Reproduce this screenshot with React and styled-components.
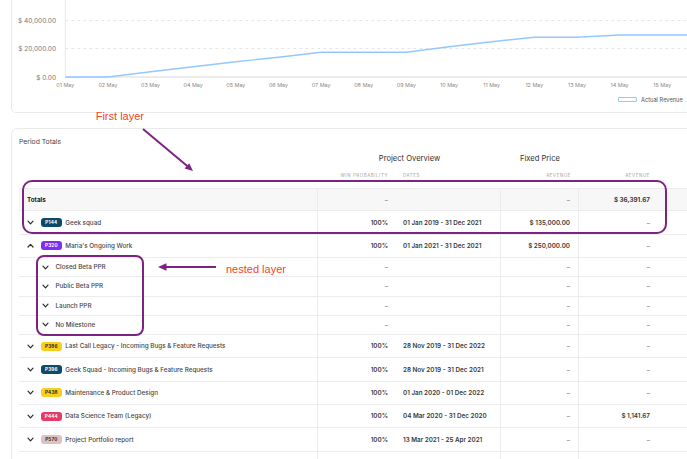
import React from "react";
import styled, { createGlobalStyle } from "styled-components";

const GlobalStyle = createGlobalStyle`
  html, body {
    margin: 0;
    padding: 0;
    background: #fff;
    overflow: hidden;
  }
  body {
    font-family: Inter, "Liberation Sans", sans-serif;
    color: #333;
  }
`;

const COLS = { name: 299, win: 78, dates: 105, fixed: 78, actual: 79, rest: 200 };

const Page = styled.div`
  position: relative;
  width: 687px;
  height: 459px;
  overflow: hidden;
`;

const Stack = styled.div`
  display: flex;
  flex-direction: column;
  gap: 15px;
  padding-left: 11px;
  width: 760px;
`;

const ChartCard = styled.section`
  height: 113px;
  box-sizing: border-box;
  border: 1px solid #ebebeb;
  border-top: none;
  border-radius: 0 0 5px 5px;
  display: flex;
  flex-direction: column;
`;

const ChartSvg = styled.svg`
  display: block;
  flex: none;
  font-family: Inter, "Liberation Sans", sans-serif;
`;

const Legend = styled.div`
  display: flex;
  align-items: center;
  gap: 5px;
  height: 14px;
  padding-left: 606px;
`;

const LegendItem = styled.div`
  display: flex;
  align-items: center;
  gap: 4px;
  font-size: 5.7px;
  color: #555;
  white-space: nowrap;
`;

const Swatch = styled.span`
  width: 19px;
  height: 5px;
  box-sizing: border-box;
  border: 1px ${(p) => (p.$dashed ? "dashed" : "solid")} ${(p) => p.$color};
  border-radius: 1px;
`;

const PeriodCard = styled.section`
  height: 420px;
  box-sizing: border-box;
  border: 1px solid #ebebeb;
  border-radius: 6px;
  padding: 8px 0 0 7px;
`;

const CardTitle = styled.div`
  font-size: 6.8px;
  line-height: 9px;
  color: #444;
`;

const GroupRow = styled.div`
  display: flex;
  align-items: center;
  height: 16px;
  margin-top: 4px;
`;

const GroupCell = styled.div`
  flex: none;
  width: ${(p) => p.$w}px;
  text-align: center;
  font-size: 7.6px;
  color: #333;
  white-space: nowrap;
`;

const SubRow = styled.div`
  display: flex;
  height: 22px;
  box-sizing: border-box;
  padding-top: 5px;
`;

const SubCell = styled.div`
  flex: none;
  width: ${(p) => p.$w}px;
  box-sizing: border-box;
  padding: 0 ${(p) => (p.$align === "left" ? "7px" : "8px")};
  text-align: ${(p) => p.$align || "right"};
  font-size: 4.4px;
  line-height: 10px;
  letter-spacing: 0.6px;
  text-transform: uppercase;
  color: #a3a3a3;
`;

const Row = styled.div`
  display: flex;
  height: ${(p) => (p.$nested ? 19.2 : 23.4)}px;
  box-sizing: border-box;
  border-bottom: 1px solid #ececec;
  border-top: ${(p) => (p.$first ? "1px solid #ececec" : "none")};
  background: ${(p) => (p.$shade ? "#f7f7f8" : "#fff")};
`;

const NameCell = styled.div`
  flex: none;
  width: ${COLS.name}px;
  box-sizing: border-box;
  display: flex;
  align-items: center;
  padding-left: ${(p) => (p.$nested ? 23 : 8)}px;
  border-right: 1px solid #ececec;
  font-size: 6.3px;
  font-weight: ${(p) => (p.$bold ? 700 : 500)};
  color: ${(p) => (p.$bold ? "#222" : "#474747")};
  white-space: nowrap;
`;

const Cell = styled.div`
  flex: none;
  width: ${(p) => p.$w}px;
  box-sizing: border-box;
  display: flex;
  align-items: center;
  justify-content: ${(p) => (p.$align === "left" ? "flex-start" : "flex-end")};
  padding: 0 ${(p) => (p.$align === "left" ? "7px" : "8px")};
  border-right: ${(p) => (p.$divider ? "1px solid #ececec" : "none")};
  font-size: 6.3px;
  font-weight: ${(p) => (p.$bold ? 700 : 600)};
  color: ${(p) => (p.$muted ? "#8f8f8f" : "#3a3a3a")};
  white-space: nowrap;
`;

const Chevron = styled.svg`
  flex: none;
  width: 7px;
  height: 5px;
  margin-right: ${(p) => (p.$nested ? 6.5 : 6.7)}px;
`;

const Badge = styled.span`
  flex: none;
  display: inline-flex;
  align-items: center;
  justify-content: center;
  width: 21.3px;
  height: 9px;
  border-radius: 3px;
  margin-right: 3.3px;
  background: ${(p) => p.$bg};
  color: ${(p) => p.$fg};
  font-size: 4.6px;
  font-weight: 700;
  letter-spacing: 0.2px;
`;

const Overlay = styled.div`
  position: absolute;
  inset: 0;
  pointer-events: none;
`;

const Note = styled.div`
  position: absolute;
  left: ${(p) => p.$x}px;
  top: ${(p) => p.$y}px;
  font-family: "Liberation Sans", Arial, sans-serif;
  font-size: 11px;
  line-height: 11px;
  color: #f4432c;
  white-space: nowrap;
`;

const Frame = styled.div`
  position: absolute;
  left: ${(p) => p.$x}px;
  top: ${(p) => p.$y}px;
  width: ${(p) => p.$w}px;
  height: ${(p) => p.$h}px;
  box-sizing: border-box;
  border: 2px solid #7d2383;
  border-radius: ${(p) => p.$r}px;
`;

const ArrowLayer = styled.svg`
  position: absolute;
  left: 0;
  top: 0;
`;

const TICKS = Array.from({ length: 15 }, (_, i) => `${String(i + 1).padStart(2, "0")} May`);
const tickX = (i) => 65.3 + i * 42.64;
const LINE = [77, 77, 71.7, 66.7, 61.7, 57.3, 52.3, 52.3, 52.3, 46.7, 41.7, 37.3, 37.3, 35, 35, 35];

const PROJECTS = [
  { code: "P144", name: "Geek squad", bg: "#0c4a6c", fg: "#fff", win: "100%", dates: "01 Jan 2019 - 31 Dec 2021", fixed: "$ 135,000.00", actual: "–" },
  {
    code: "P320", name: "Maria's Ongoing Work", bg: "#7b2ff2", fg: "#fff", win: "100%", dates: "01 Jan 2021 - 31 Dec 2021", fixed: "$ 250,000.00", actual: "–",
    open: true,
    children: ["Closed Beta PPR", "Public Beta PPR", "Launch PPR", "No Milestone"],
  },
  { code: "P386", name: "Last Call Legacy - Incoming Bugs & Feature Requests", bg: "#f8cf1f", fg: "#2b2b2b", win: "100%", dates: "28 Nov 2019 - 31 Dec 2022", fixed: "–", actual: "–" },
  { code: "P396", name: "Geek Squad - Incoming Bugs & Feature Requests", bg: "#0c4a6c", fg: "#fff", win: "100%", dates: "28 Nov 2019 - 31 Dec 2021", fixed: "–", actual: "–" },
  { code: "P438", name: "Maintenance & Product Design", bg: "#f8cf1f", fg: "#2b2b2b", win: "100%", dates: "01 Jan 2020 - 01 Dec 2022", fixed: "–", actual: "–" },
  { code: "P444", name: "Data Science Team (Legacy)", bg: "#e83a68", fg: "#fff", win: "100%", dates: "04 Mar 2020 - 31 Dec 2020", fixed: "–", actual: "$ 1,141.67" },
  { code: "P570", name: "Project Portfolio report", bg: "#dcc3c2", fg: "#2b2b2b", win: "100%", dates: "13 Mar 2021 - 25 Apr 2021", fixed: "–", actual: "–" },
  { code: "P592", name: "Internal Tooling", bg: "#ece4e4", fg: "#2b2b2b", win: "100%", dates: "01 May 2021 - 31 Dec 2021", fixed: "–", actual: "–" },
];

const ChevronIcon = ({ up, nested }) => (
  <Chevron viewBox="0 0 7 5" $nested={nested}>
    <polyline
      points={up ? "1,4 3.5,1.4 6,4" : "1,1.2 3.5,3.8 6,1.2"}
      fill="none"
      stroke="#2a2a2a"
      strokeWidth="1.2"
      strokeLinecap="round"
      strokeLinejoin="round"
    />
  </Chevron>
);

const RevenueChart = () => (
  <ChartSvg width="748" height="92" viewBox="12 0 748 92">
    <line x1="65.3" y1="0" x2="65.3" y2="77" stroke="#e8e8e8" />
    <line x1="65.3" y1="20.5" x2="760" y2="20.5" stroke="#e6e6e6" strokeDasharray="3 3" />
    <line x1="65.3" y1="48.5" x2="760" y2="48.5" stroke="#e6e6e6" strokeDasharray="3 3" />
    <line x1="65.3" y1="77" x2="760" y2="77" stroke="#d8d8d8" />
    {[["$ 40,000.00", 20.5], ["$ 20,000.00", 48.5], ["$ 0.00", 77]].map(([t, y]) => (
      <text key={t} x="56" y={y + 2.5} textAnchor="end" fontSize="6.5" fill="#777">
        {t}
      </text>
    ))}
    {TICKS.map((t, i) => (
      <text key={t} x={tickX(i)} y="87" textAnchor="middle" fontSize="5.4" fill="#888">
        {t}
      </text>
    ))}
    <polyline
      points={LINE.map((y, i) => `${tickX(i)},${y}`).join(" ")}
      fill="none"
      stroke="#93c8ff"
      strokeWidth="1.4"
    />
  </ChartSvg>
);

const ProjectRow = ({ p }) => (
  <Row>
    <NameCell>
      <ChevronIcon up={p.open} />
      <Badge $bg={p.bg} $fg={p.fg}>{p.code}</Badge>
      {p.name}
    </NameCell>
    <Cell $w={COLS.win}>{p.win}</Cell>
    <Cell $w={COLS.dates} $align="left" $divider>{p.dates}</Cell>
    <Cell $w={COLS.fixed} $divider $muted={p.fixed === "–"}>{p.fixed}</Cell>
    <Cell $w={COLS.actual} $muted={p.actual === "–"}>{p.actual}</Cell>
    <Cell $w={COLS.rest} />
  </Row>
);

const MilestoneRow = ({ name }) => (
  <Row $nested>
    <NameCell $nested>
      <ChevronIcon nested />
      {name}
    </NameCell>
    <Cell $w={COLS.win} $muted>–</Cell>
    <Cell $w={COLS.dates} $align="left" $divider />
    <Cell $w={COLS.fixed} $divider $muted>–</Cell>
    <Cell $w={COLS.actual} $muted>–</Cell>
    <Cell $w={COLS.rest} />
  </Row>
);

const App = () => {
  return (
    <Page>
      <GlobalStyle />
      <Stack>
        <ChartCard>
          <RevenueChart />
          <Legend>
            <LegendItem>
              <Swatch $color="#93c8ff" />
              Actual Revenue
            </LegendItem>
            <LegendItem>
              <Swatch $color="#b14fd8" $dashed />
              Forecast Revenue
            </LegendItem>
          </Legend>
        </ChartCard>

        <PeriodCard>
          <CardTitle>Period Totals</CardTitle>
          <GroupRow>
            <GroupCell $w={COLS.name} />
            <GroupCell $w={COLS.win + COLS.dates}>Project Overview</GroupCell>
            <GroupCell $w={COLS.fixed}>Fixed Price</GroupCell>
            <GroupCell $w={COLS.actual + COLS.rest + 30}>Actuals</GroupCell>
          </GroupRow>
          <SubRow>
            <SubCell $w={COLS.name} />
            <SubCell $w={COLS.win}>Win Probability</SubCell>
            <SubCell $w={COLS.dates} $align="left">Dates</SubCell>
            <SubCell $w={COLS.fixed}>Revenue</SubCell>
            <SubCell $w={COLS.actual}>Revenue</SubCell>
          </SubRow>

          <Row $first $shade>
            <NameCell $bold>Totals</NameCell>
            <Cell $w={COLS.win} $muted>–</Cell>
            <Cell $w={COLS.dates} $align="left" $divider />
            <Cell $w={COLS.fixed} $divider $muted>–</Cell>
            <Cell $w={COLS.actual} $bold>$ 36,391.67</Cell>
            <Cell $w={COLS.rest} />
          </Row>
          {PROJECTS.map((p) => (
            <React.Fragment key={p.code}>
              <ProjectRow p={p} />
              {p.open && p.children.map((c) => <MilestoneRow key={c} name={c} />)}
            </React.Fragment>
          ))}
        </PeriodCard>
      </Stack>

      <Overlay>
        <Note $x={95.7} $y={111}>First layer</Note>
        <Note $x={226} $y={264}>nested layer</Note>
        <Frame $x={22} $y={180} $w={645} $h={54} $r={10} />
        <Frame $x={36} $y={255} $w={108} $h={81} $r={8} />
        <ArrowLayer width="687" height="459">
          <line x1="143" y1="129" x2="187.5" y2="166.3" stroke="#7d2383" strokeWidth="2" />
          <polygon points="193,171 184.6,168.6 189.2,163.2" fill="#7d2383" />
          <line x1="216" y1="267" x2="165" y2="267" stroke="#7d2383" strokeWidth="2" />
          <polygon points="158,267 166.5,263.3 166.5,270.7" fill="#7d2383" />
        </ArrowLayer>
      </Overlay>
    </Page>
  );
};

export default App;
